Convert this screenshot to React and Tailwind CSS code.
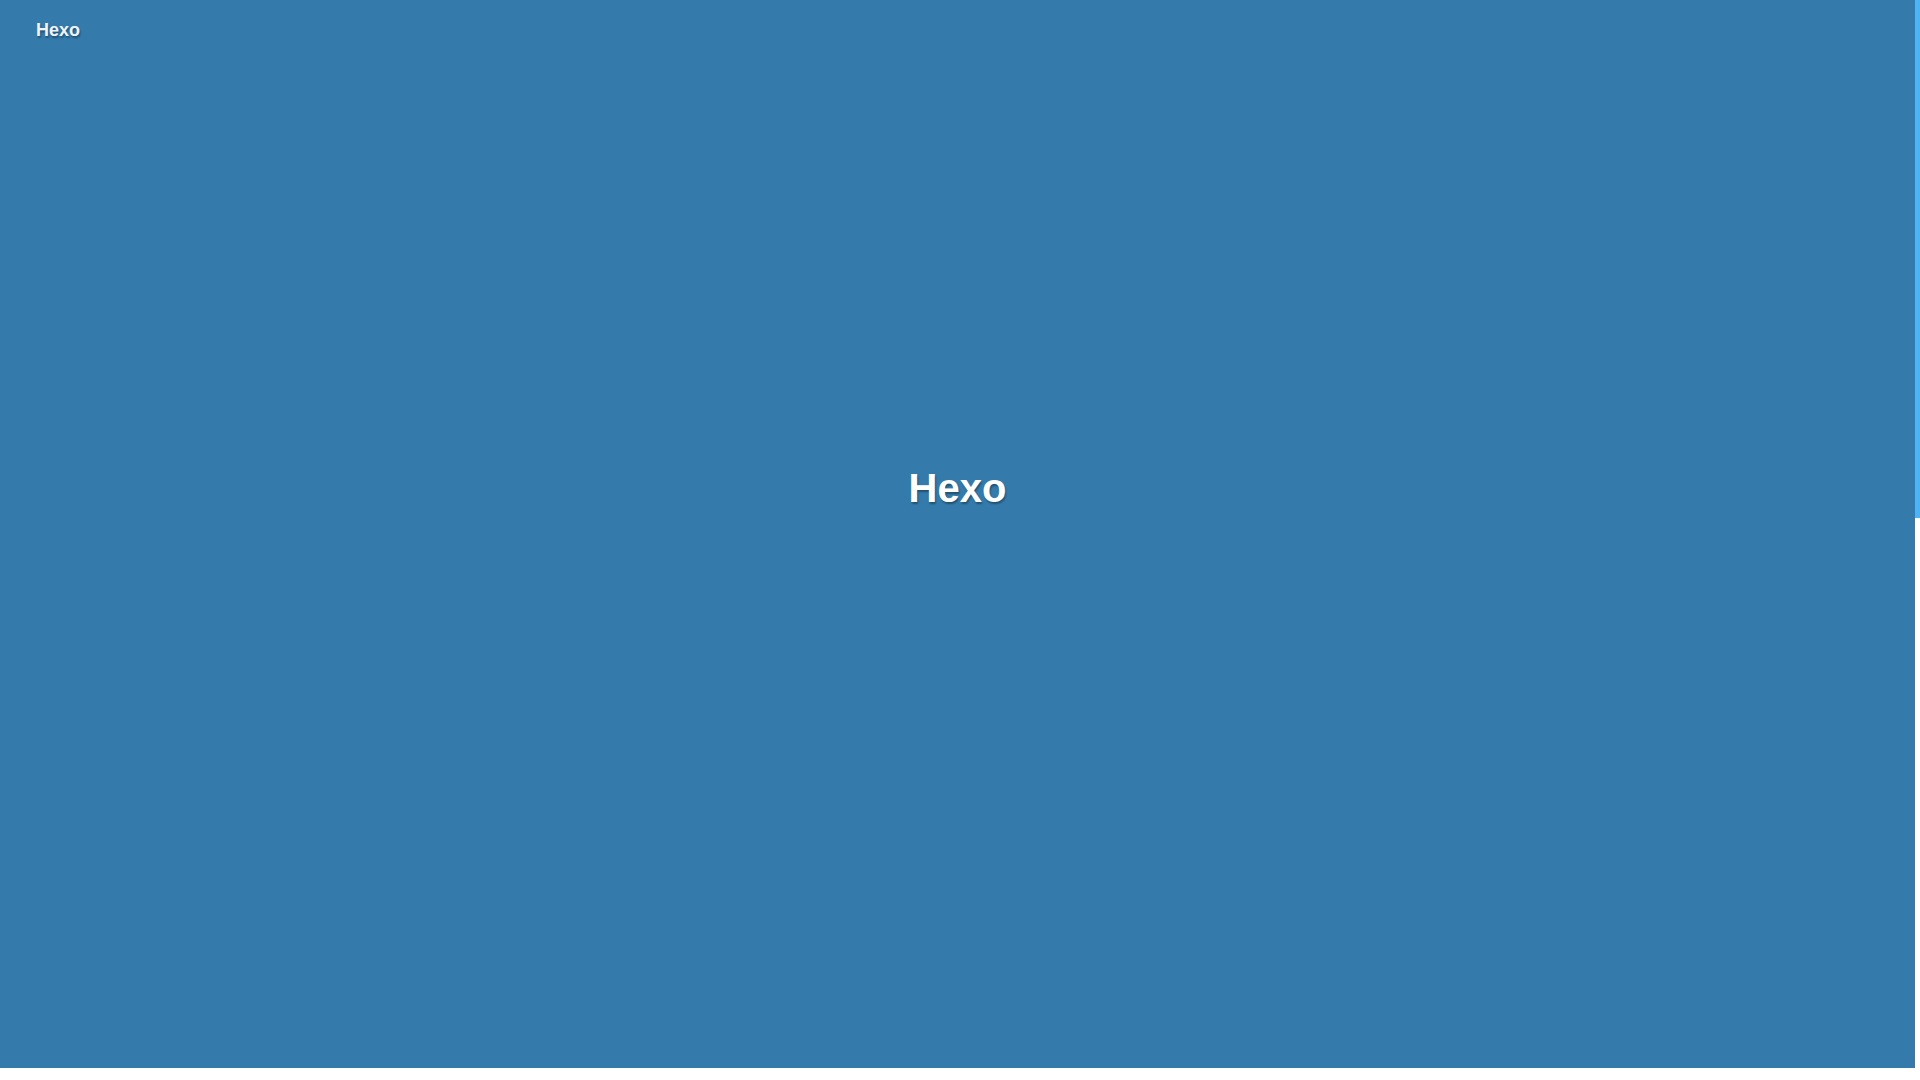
import React from "react";

export default function App() {
  return (
    <div className="flex h-screen w-full overflow-hidden bg-white font-['Liberation_Sans',Arial,sans-serif]">
      <div className="flex h-[1068px] w-[1915px] flex-col bg-[#347bac] text-white [text-shadow:1px_2px_2px_rgba(0,0,0,0.35)]">
        <header className="pl-9 pt-[16px]">
          <a className="text-lg font-bold leading-7 text-[#eef3f7]">Hexo</a>
        </header>
        <main className="mt-[420px] text-center">
          <h1 className="text-[40px] font-bold leading-[48px]">Hexo</h1>
        </main>
      </div>
      <div className="flex w-[5px] flex-col">
        <div className="h-[518px] bg-[#4db3f4]" />
      </div>
    </div>
  );
}
